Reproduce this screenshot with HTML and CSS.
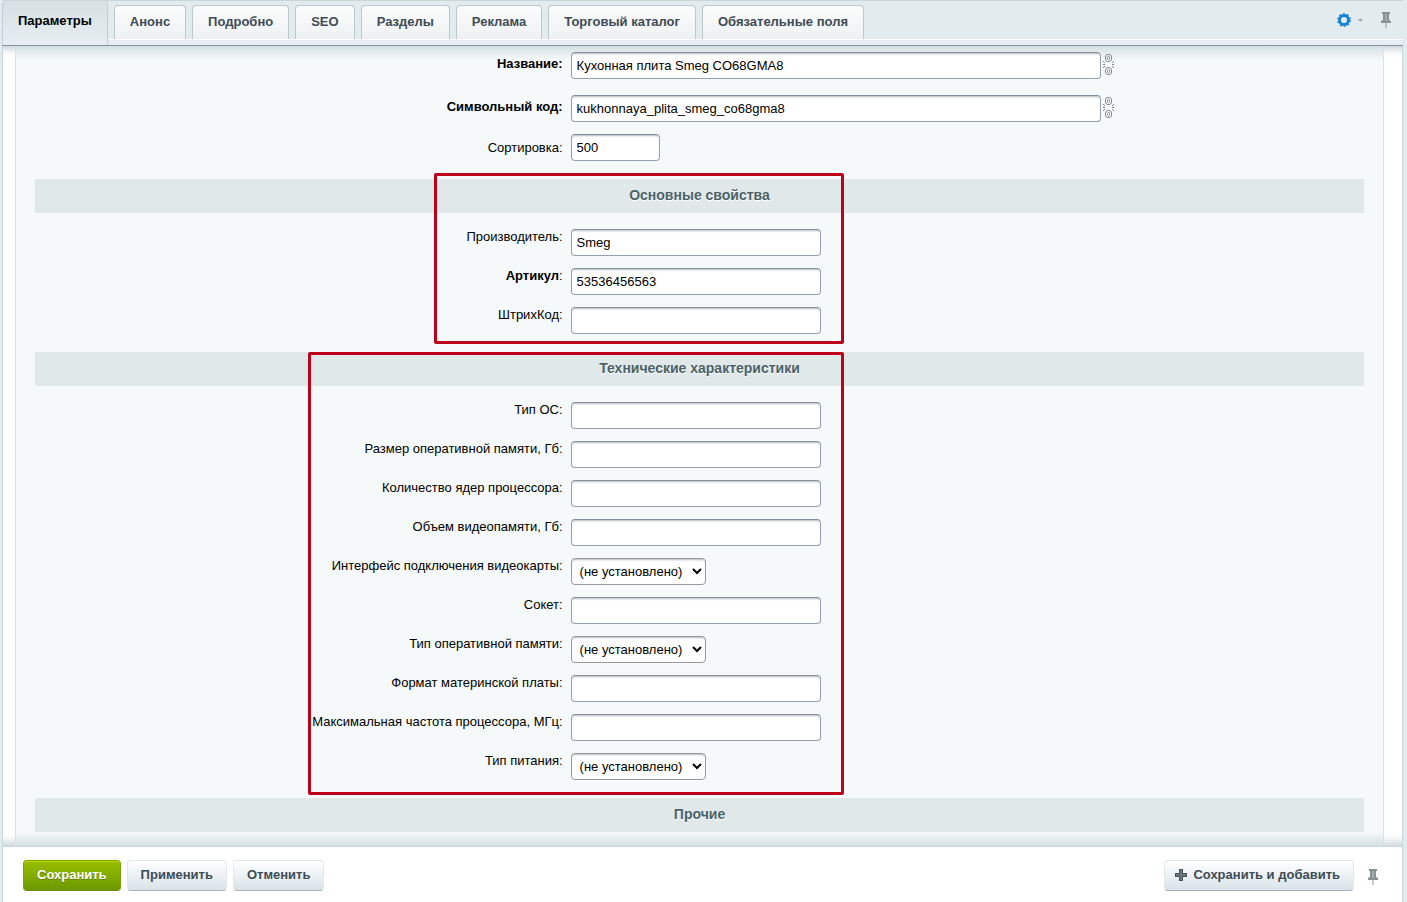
FILE: index.html
```html
<!doctype html>
<html lang="ru">
  <head>
    <meta charset="UTF-8" />
    <meta name="viewport" content="width=device-width, initial-scale=1.0" />
    <title>Параметры товара</title>
    <link rel="stylesheet" href="styles.css" />
  </head>
  <body>
    <svg class="sprite" aria-hidden="true">
      <symbol id="pin" viewBox="0 0 10 16">
        <path d="M1 0h8v2H8v6l2 1v2H0V9l2-1V2H1z" fill="#899195" />
        <path d="M4 2h2v7H4z" fill="#a3abad" />
        <path d="M4.5 11h1v5h-1z" fill="#899195" />
      </symbol>
      <symbol id="chain" viewBox="0 0 12 22">
        <g fill="none" stroke="#85898b">
          <rect x="2.5" y=".5" width="6" height="7" rx="2.5" />
          <rect x="4.5" y="2.5" width="2" height="3" rx="1" />
          <rect x="2.5" y="13.5" width="6" height="7" rx="2.5" />
          <rect x="4.5" y="15.5" width="2" height="3" rx="1" />
          <path d="M0 7.5h1M1 8.5h1M0 10.5h2M1 12.5h1M0 13.5h1M10 7.5h1M9 8.5h1M9 10.5h2M9 12.5h1M10 13.5h1" />
        </g>
      </symbol>
    </svg>

    <form class="panel">
      <header class="tabs-bar">
        <nav class="tabs">
          <button type="button" class="tab active">Параметры</button>
          <button type="button" class="tab">Анонс</button>
          <button type="button" class="tab">Подробно</button>
          <button type="button" class="tab">SEO</button>
          <button type="button" class="tab">Разделы</button>
          <button type="button" class="tab">Реклама</button>
          <button type="button" class="tab">Торговый каталог</button>
          <button type="button" class="tab">Обязательные поля</button>
        </nav>
        <div class="tools">
          <button type="button" class="icon-btn settings" aria-label="Настройки">
            <svg width="14" height="14" viewBox="0 0 14 14">
              <circle cx="7" cy="7" r="4.5" fill="none" stroke="#1581d2" stroke-width="2.8" />
              <circle cx="7" cy="7" r="6.2" fill="none" stroke="#1581d2" stroke-width="1.3" stroke-dasharray="2.1 1.795" />
            </svg>
            <svg width="5" height="3" viewBox="0 0 5 3"><path d="M0 0h5L2.5 3z" fill="#9da5a8" /></svg>
          </button>
          <button type="button" class="icon-btn" aria-label="Закрепить">
            <svg width="10" height="16"><use href="#pin" /></svg>
          </button>
        </div>
      </header>

      <main class="content">
        <div class="sheet">
          <div class="rows main-rows">
            <div class="row spaced">
              <label for="name"><b>Название:</b></label>
              <div class="field">
                <input type="text" id="name" class="long" value="Кухонная плита Smeg CO68GMA8" />
                <button type="button" class="icon-btn link-btn" aria-label="Связь названия">
                  <svg width="12" height="22"><use href="#chain" /></svg>
                </button>
              </div>
            </div>
            <div class="row spaced">
              <label for="code"><b>Символьный код:</b></label>
              <div class="field">
                <input type="text" id="code" class="long" value="kukhonnaya_plita_smeg_co68gma8" />
                <button type="button" class="icon-btn link-btn" aria-label="Связь кода">
                  <svg width="12" height="22"><use href="#chain" /></svg>
                </button>
              </div>
            </div>
            <div class="row centered">
              <label for="sort">Сортировка:</label>
              <div class="field"><input type="text" id="sort" class="short" value="500" /></div>
            </div>
          </div>

          <section class="group">
            <h2>Основные свойства</h2>
            <div class="rows">
              <div class="row">
                <label for="vendor">Производитель:</label>
                <div class="field"><input type="text" id="vendor" value="Smeg" /></div>
              </div>
              <div class="row">
                <label for="article"><b>Артикул</b>:</label>
                <div class="field"><input type="text" id="article" value="53536456563" /></div>
              </div>
              <div class="row">
                <label for="barcode">ШтрихКод:</label>
                <div class="field"><input type="text" id="barcode" /></div>
              </div>
            </div>
            <div class="frame frame-basic"></div>
          </section>

          <section class="group">
            <h2>Технические характеристики</h2>
            <div class="rows">
              <div class="row">
                <label for="os">Тип ОС:</label>
                <div class="field"><input type="text" id="os" /></div>
              </div>
              <div class="row">
                <label for="ram">Размер оперативной памяти, Гб:</label>
                <div class="field"><input type="text" id="ram" /></div>
              </div>
              <div class="row">
                <label for="cores">Количество ядер процессора:</label>
                <div class="field"><input type="text" id="cores" /></div>
              </div>
              <div class="row">
                <label for="vram">Объем видеопамяти, Гб:</label>
                <div class="field"><input type="text" id="vram" /></div>
              </div>
              <div class="row">
                <label for="gpu">Интерфейс подключения видеокарты:</label>
                <div class="field"><select id="gpu"><option>(не установлено)</option></select></div>
              </div>
              <div class="row">
                <label for="socket">Сокет:</label>
                <div class="field"><input type="text" id="socket" /></div>
              </div>
              <div class="row">
                <label for="ram-type">Тип оперативной памяти:</label>
                <div class="field"><select id="ram-type"><option>(не установлено)</option></select></div>
              </div>
              <div class="row">
                <label for="board">Формат материнской платы:</label>
                <div class="field"><input type="text" id="board" /></div>
              </div>
              <div class="row">
                <label for="freq">Максимальная частота процессора, МГц:</label>
                <div class="field"><input type="text" id="freq" /></div>
              </div>
              <div class="row">
                <label for="power">Тип питания:</label>
                <div class="field"><select id="power"><option>(не установлено)</option></select></div>
              </div>
            </div>
            <div class="frame frame-tech"></div>
          </section>

          <section class="group">
            <h2>Прочие</h2>
          </section>
        </div>
      </main>

      <footer class="actions">
        <button type="submit" class="btn btn-save">Сохранить</button>
        <button type="button" class="btn">Применить</button>
        <button type="button" class="btn">Отменить</button>
        <button type="button" class="btn btn-add">
          <svg width="12" height="12" viewBox="0 0 12 12"><path d="M4 0h4v4h4v4H8v4H4V8H0V4h4z" fill="#4b545b" /><path d="M5 1h2v4h4v2H7v4H5V7H1V5h4z" fill="#6b757c" /></svg>
          Сохранить и добавить
        </button>
        <button type="button" class="icon-btn pin-bottom" aria-label="Закрепить панель">
          <svg width="10" height="16"><use href="#pin" /></svg>
        </button>
      </footer>
    </form>
  </body>
</html>
```
FILE: styles.css
```css
* {
  box-sizing: border-box;
}

body {
  margin: 0;
  background: #e2ebed;
  color: #000;
  font-family: "Liberation Sans", Arial, sans-serif;
  font-size: 13px;
}

button,
input,
select {
  font: inherit;
}

.sprite {
  display: block;
  width: 0;
  height: 0;
}

.panel {
  display: flex;
  flex-direction: column;
  min-height: 100vh;
  margin: 0 4px 0 2px;
}

/* Tabs */
.tabs-bar {
  display: flex;
  justify-content: space-between;
  height: 46px;
  padding-bottom: 6px;
  border-top: 1px solid #ccd6d9;
  border-bottom: 1px solid #87939b;
  background: linear-gradient(#e2ebed 38px, #fff 38px, #fff 39px, #e7eef1 39px);
}

.tabs {
  display: flex;
  align-items: flex-end;
  gap: 6px;
}

.tab {
  height: 34px;
  padding: 0 15px 2px;
  border: 1px solid #bdc8cb;
  border-bottom: 0;
  border-radius: 4px 4px 0 0;
  background: linear-gradient(#fbfcfc, #eef1f3);
  color: #3f4b54;
  font-weight: bold;
}

.tab.active {
  align-self: stretch;
  height: 44px;
  padding-bottom: 6px;
  border-color: #c3cdd1;
  border-top: 0;
  background: linear-gradient(#d7e0e3, #e7eef1);
  color: #000;
}

.icon-btn {
  display: flex;
  align-items: center;
  padding: 0;
  border: 0;
  background: none;
}

.tools {
  display: flex;
  align-items: center;
  gap: 18px;
  padding-right: 12px;
}

.settings {
  gap: 7px;
}

/* Form */
.content {
  flex: 1;
  padding: 0 18px 0 12px;
  border: solid #c9d6da;
  border-width: 0 1px;
  background: #fff;
  box-shadow: inset 0 12px 10px -10px #b9c6cb, inset 0 -14px 10px -10px #c9d3d7;
}

.sheet {
  padding: 6px 19px 14px;
  border: solid #d8e3e8;
  border-width: 0 1px;
  background: linear-gradient(#d5dfe2, #f5f9f9 14px, #f5f9f9 calc(100% - 14px), #d5dfe2);
}

.rows {
  display: grid;
  gap: 12px;
  padding: 16px 0 18px;
}

.main-rows {
  padding-top: 0;
}

.row {
  display: grid;
  grid-template-columns: 40% 60%;
}

.row label {
  padding-right: 4px;
  line-height: 16px;
  text-align: right;
}

.row.spaced label {
  padding-top: 4px;
}

.row.spaced:first-child {
  margin-bottom: 4px;
}

.row.centered label {
  line-height: 27px;
}

.field {
  display: flex;
  gap: 2px;
  padding-left: 4px;
}

.link-btn {
  padding-bottom: 2px;
}

.field input,
.field select {
  height: 27px;
  border: 1px solid #959fae;
  border-top-color: #87919c;
  border-radius: 4px;
  background: #fff;
  color: #000;
  box-shadow: inset 0 2px 2px -1px #b4bbc1;
}

.field input {
  width: 250px;
  padding: 0 5px;
}

.field input.long {
  width: 530px;
}

.field input.short {
  width: 89px;
}

.field select {
  width: 135px;
  padding: 0 4px;
  border-color: #999;
}

.group {
  position: relative;
}

.group h2 {
  margin: 0;
  padding-bottom: 2px;
  background: #e0e8ea;
  color: #4b6267;
  font-size: 14px;
  line-height: 32px;
  text-align: center;
  text-shadow: 0 1px #fff;
}

/* Highlight frames over the groups */
.frame {
  position: absolute;
  border: 3px solid #bd0319;
  border-radius: 2px;
  pointer-events: none;
}

.frame-basic {
  top: -6px;
  bottom: 8px;
  left: calc(40% - 133px);
  width: 410px;
}

.frame-tech {
  top: 0;
  bottom: 3px;
  left: calc(40% - 259px);
  width: 536px;
}

/* Bottom panel */
.actions {
  display: flex;
  align-items: flex-start;
  gap: 6px;
  min-height: 56px;
  padding: 13px 24px 11px 20px;
  border: solid #c9d6da;
  border-width: 1px 1px 0;
  background: #fff;
}

.btn {
  height: 31px;
  padding: 0 13px 2px;
  border: 1px solid #e3e8ea;
  border-bottom-color: #abb5b9;
  border-radius: 4px;
  background: linear-gradient(#fff, #d9e3e7);
  color: #3f4b54;
  font-weight: bold;
}

.btn-save {
  border-color: #82a600 #7b9f00 #6b8f00;
  background: linear-gradient(#99be00, #6d9900);
  box-shadow: inset 0 1px #bdd600;
  color: #fff;
  text-shadow: 0 1px #628000;
}

.btn-add {
  display: flex;
  align-items: center;
  gap: 6px;
  margin-left: auto;
  padding-left: 10px;
}

.pin-bottom {
  margin: 9px 0 0 8px;
}
```
